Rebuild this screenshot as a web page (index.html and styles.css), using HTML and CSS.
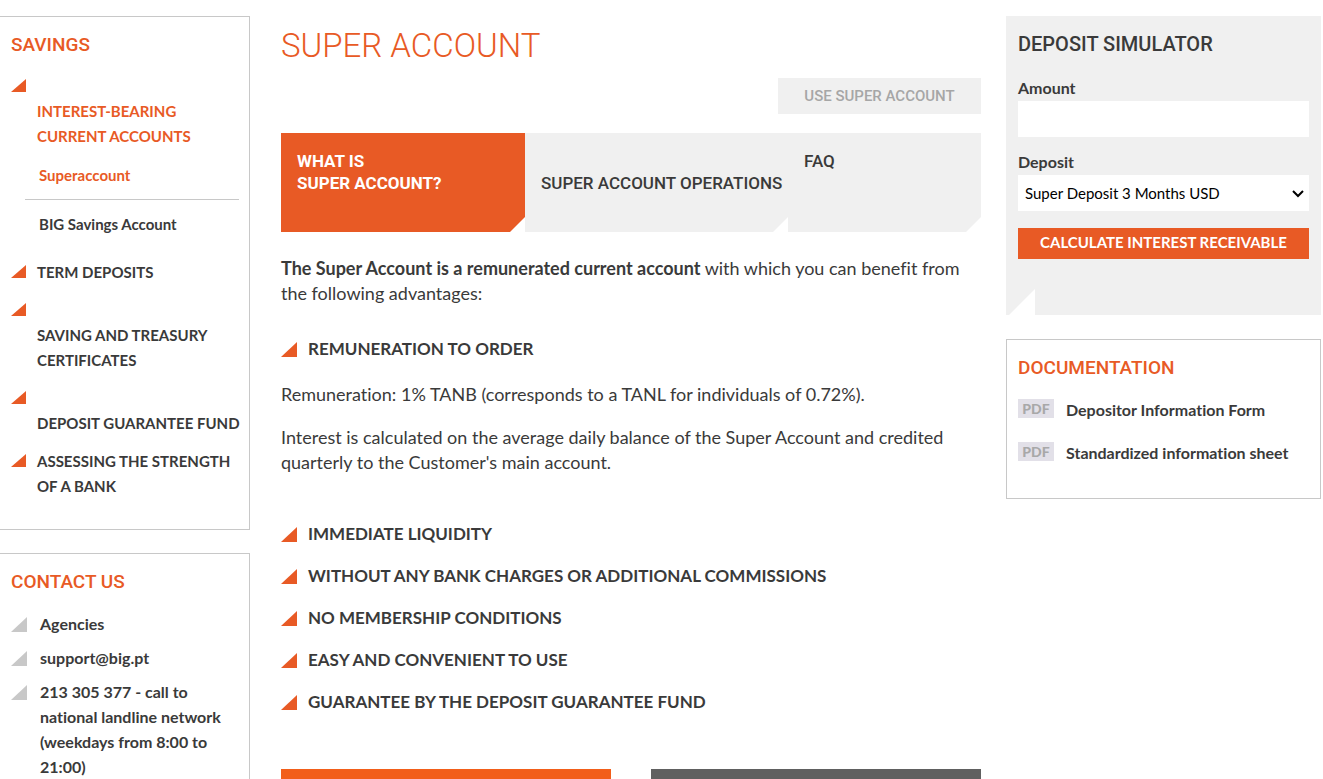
FILE: index.html
```
<!DOCTYPE html>
<html lang="en">
<head>
    <meta charset="UTF-8">
    <meta name="viewport" content="width=device-width, initial-scale=1.0">
    <title>Super Account</title>
    <link rel="stylesheet" href="styles.css">
</head>
<body>

<div class="page">

    <aside class="sidebar">
        <nav class="box savings">
            <h2>SAVINGS</h2>
            <ul class="menu">
                <li class="below"><a class="active" href="#">INTEREST-BEARING CURRENT ACCOUNTS</a></li>
            </ul>
            <ul class="submenu">
                <li><a class="active" href="#">Superaccount</a></li>
                <li><a href="#">BIG Savings Account</a></li>
            </ul>
            <ul class="menu">
                <li><a href="#">TERM DEPOSITS</a></li>
                <li class="below"><a href="#">SAVING AND TREASURY CERTIFICATES</a></li>
                <li class="below"><a href="#">DEPOSIT GUARANTEE FUND</a></li>
                <li><a href="#">ASSESSING THE STRENGTH OF A BANK</a></li>
            </ul>
        </nav>

        <section class="box contact">
            <h2>CONTACT US</h2>
            <ul class="contact-list">
                <li><a href="#">Agencies</a></li>
                <li><a href="#">support@big.pt</a></li>
                <li><span>213 305 377 - call to national landline network (weekdays from 8:00 to 21:00)</span></li>
            </ul>
        </section>
    </aside>

    <main class="content">
        <h1>SUPER ACCOUNT</h1>
        <a class="use-account" href="#">USE SUPER ACCOUNT</a>

        <div class="tabs">
            <button type="button" class="tab selected">WHAT IS<br>SUPER ACCOUNT?</button>
            <button type="button" class="tab"><br>SUPER ACCOUNT OPERATIONS</button>
            <button type="button" class="tab">FAQ</button>
        </div>

        <p><strong>The Super Account is a remunerated current account</strong> with which you can benefit from the following advantages:</p>

        <h3 class="first">REMUNERATION TO ORDER</h3>
        <p>Remuneration: 1% TANB (corresponds to a TANL for individuals of 0.72%).</p>
        <p>Interest is calculated on the average daily balance of the Super Account and credited quarterly to the Customer's main account.</p>

        <div class="advantages">
            <h3>IMMEDIATE LIQUIDITY</h3>
            <h3>WITHOUT ANY BANK CHARGES OR ADDITIONAL COMMISSIONS</h3>
            <h3>NO MEMBERSHIP CONDITIONS</h3>
            <h3>EASY AND CONVENIENT TO USE</h3>
            <h3>GUARANTEE BY THE DEPOSIT GUARANTEE FUND</h3>
        </div>

        <div class="banners">
            <div class="banner orange"></div>
            <div class="banner grey"></div>
        </div>
    </main>

    <aside class="tools">
        <form class="simulator">
            <h2>DEPOSIT SIMULATOR</h2>
            <label for="amount">Amount</label>
            <input type="text" id="amount">
            <label for="deposit">Deposit</label>
            <div class="select-wrap">
                <select id="deposit">
                    <option>Super Deposit 3 Months USD</option>
                </select>
                <svg class="arrow" width="12" height="8" viewBox="0 0 12 8"><path d="M1 1l5 5 5-5" fill="none" stroke="#000" stroke-width="2"/></svg>
            </div>
            <button type="button">CALCULATE INTEREST RECEIVABLE</button>
        </form>

        <section class="box documentation">
            <h2>DOCUMENTATION</h2>
            <ul class="documents">
                <li><span class="pdf">PDF</span><a href="#">Depositor Information Form</a></li>
                <li><span class="pdf">PDF</span><a href="#">Standardized information sheet</a></li>
            </ul>
        </section>
    </aside>

</div>

</body>
</html>
```
FILE: styles.css
```
* {
    box-sizing: border-box;
}

body {
    margin: 0;
    font-family: Lato, "Liberation Sans", sans-serif;
    font-size: 18px;
    font-variant-ligatures: none;
    line-height: 25px;
    color: #3a3a3a;
    background-color: #fff;
}

h1, h2, h3, p, ul {
    margin: 0;
    padding: 0;
}

ul {
    list-style: none;
}

a {
    color: inherit;
    text-decoration: none;
}

.page {
    display: grid;
    grid-template-columns: 250px 1fr 315px;
    align-items: start;
    height: 100vh;
    padding: 16px 2px 0 0;
    overflow: hidden;
}

.box {
    border: 1px solid #c8c8c8;
    padding: 15px 6px 15px 11px;
}

h2 {
    font-family: Roboto, "Liberation Sans", sans-serif;
    font-size: 19px;
    font-weight: 500;
    color: #e85a25;
}

/* Left column */
.sidebar .box {
    border-left: none;
    margin-bottom: 23px;
    font-weight: bold;
}

.sidebar h2 {
    margin-bottom: 17px;
}

.savings {
    font-size: 15px;
}

.savings .menu {
    display: flex;
    flex-direction: column;
    gap: 13px;
}

.menu li, .contact-list li, h3 {
    display: flex;
    gap: 11px;
}

.menu li::before, .contact-list li::before, h3::before {
    content: "";
    flex: none;
    width: 15px;
    height: 13px;
    margin: 5px 0 7px;
    background-color: #e85a25;
    clip-path: polygon(100% 0, 100% 100%, 0 100%);
}

.menu .below {
    flex-direction: column;
    gap: 0;
}

.menu .below a {
    margin-left: 26px;
}

.active {
    color: #e85a25;
}

.submenu {
    margin: 14px 4px 23px 14px;
}

.submenu li {
    padding-left: 14px;
}

.submenu li:first-child {
    padding-bottom: 11px;
    margin-bottom: 12px;
    border-bottom: 1px solid #c8c8c8;
}

.sidebar .savings {
    padding-bottom: 30px;
}

.contact {
    font-size: 16px;
}

.contact-list {
    display: flex;
    flex-direction: column;
    gap: 9px;
}

.contact-list li {
    gap: 13px;
}

.contact-list li::before {
    width: 16px;
    height: 15px;
    margin: 6px 0 4px;
    background-color: #c8c8c8;
}

/* Middle column */
.content {
    padding: 0 25px 0 31px;
}

h1 {
    font-family: Roboto, "Liberation Sans", sans-serif;
    font-size: 33px;
    font-weight: 300;
    line-height: 60px;
    color: #e85a25;
}

.use-account {
    display: block;
    width: 203px;
    margin: 2px 0 19px auto;
    background-color: #f0f0f0;
    color: #a6a6a6;
    font-family: Roboto, "Liberation Sans", sans-serif;
    font-size: 15px;
    font-weight: 500;
    line-height: 36px;
    text-align: center;
}

.tabs {
    display: grid;
    grid-template-columns: 244fr 263fr 193fr;
    height: 99px;
    margin-bottom: 24px;
}

.tab {
    display: flex;
    flex-direction: column;
    padding: 17px 0 0 16px;
    border: none;
    background-color: #f0f0f0;
    color: #3a3a3a;
    font-family: Roboto, "Liberation Sans", sans-serif;
    font-size: 17px;
    font-weight: 500;
    line-height: 22px;
    text-align: left;
    white-space: nowrap;
    cursor: pointer;
    clip-path: polygon(0 0, 100% 0, 100% calc(100% - 15px), calc(100% - 15px) 100%, 0 100%);
}

.tab.selected {
    background-color: #e85a25;
    color: #fff;
    font-weight: bold;
}

p {
    margin-bottom: 18px;
}

h3 {
    font-size: 17px;
    font-weight: bold;
}

h3::before {
    width: 16px;
    height: 15px;
    margin: 6px 0 4px;
}

h3.first {
    margin: 30px 0 21px;
}

.advantages {
    display: flex;
    flex-direction: column;
    gap: 17px;
    margin: 46px 0 55px;
}

.banners {
    display: grid;
    grid-template-columns: 1fr 1fr;
    gap: 40px;
}

.banner {
    height: 120px;
}

.banner.orange {
    background-color: #f25e1a;
}

.banner.grey {
    background-color: #606060;
}

/* Right column */
.simulator {
    display: flex;
    flex-direction: column;
    margin-bottom: 24px;
    padding: 16px 12px 56px;
    background-color: #f0f0f0;
    clip-path: polygon(0 0, 100% 0, 100% 100%, 29px 100%, 29px calc(100% - 26px), 3px 100%, 0 100%);
}

.simulator h2 {
    margin-bottom: 18px;
    font-size: 20px;
    color: #3a3a3a;
}

.simulator label {
    margin-bottom: 1px;
    font-size: 16px;
    font-weight: bold;
}

.simulator input, .simulator select {
    width: 100%;
    height: 36px;
    padding: 0 7px;
    border: none;
    border-radius: 0;
    background-color: #fff;
    color: #000;
    font-family: Lato, "Liberation Sans", sans-serif;
    font-size: 15px;
}

.simulator input {
    margin-bottom: 12px;
}

.select-wrap {
    display: flex;
    position: relative;
    margin-bottom: 17px;
}

.simulator select {
    appearance: none;
}

.arrow {
    position: absolute;
    top: 15px;
    right: 5px;
    pointer-events: none;
}

.simulator button {
    height: 31px;
    padding: 0 0 4px;
    border: none;
    background-color: #e85a25;
    color: #fff;
    font-family: Lato, "Liberation Sans", sans-serif;
    font-size: 15px;
    font-weight: bold;
    cursor: pointer;
}

.documentation {
    padding-bottom: 33px;
    font-size: 16px;
    font-weight: bold;
}

.documents {
    display: flex;
    flex-direction: column;
    gap: 18px;
    margin-top: 17px;
}

.documents li {
    display: flex;
    align-items: center;
    gap: 12px;
}

.pdf {
    width: 36px;
    margin-bottom: 2px;
    background-color: #e2e0e8;
    color: #a8a8a8;
    font-size: 14px;
    font-weight: 900;
    line-height: 19px;
    text-align: center;
}
```
